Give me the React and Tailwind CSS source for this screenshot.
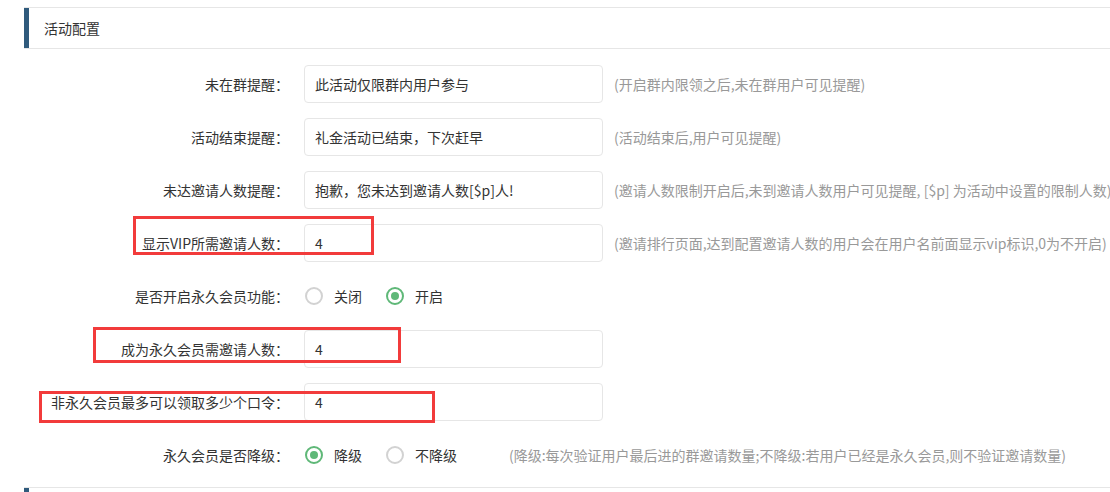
import React from "react";

const font = { fontFamily: '"Noto Sans CJK SC", "Noto Sans", sans-serif' };

function Label({ children }) {
  return (
    <div className="w-[280px] shrink-0 pr-[15px] py-[9px] text-right leading-[20px] text-[14px] text-[#333] whitespace-nowrap">
      {children}
    </div>
  );
}

function InputRow({ label, value, hint }) {
  return (
    <div className="flex items-start h-[38px] mb-[15px]">
      <Label>{label}</Label>
      <div className="w-[299px] h-[38px] shrink-0 border border-[#e6e6e6] rounded-[4px] pl-[10px] flex items-center text-[14px] text-[#333] bg-white">
        {value}
      </div>
      {hint && (
        <div className="ml-[11px] py-[9px] leading-[20px] text-[14px] text-[#999] whitespace-nowrap">
          {hint}
        </div>
      )}
    </div>
  );
}

function Radio({ checked, children }) {
  return (
    <div className="flex items-center mr-[24px]">
      {checked ? (
        <span className="w-[18px] h-[18px] rounded-full border-[2px] border-[#5fb878] flex items-center justify-center">
          <span className="w-[8px] h-[8px] rounded-full bg-[#5fb878]" />
        </span>
      ) : (
        <span className="w-[18px] h-[18px] rounded-full border-[2px] border-[#d2d2d2]" />
      )}
      <span className="ml-[11px] text-[14px] text-[#333] leading-[20px]">{children}</span>
    </div>
  );
}

function RadioRow({ label, options, hint }) {
  return (
    <div className="flex items-start h-[38px] mb-[15px]">
      <Label>{label}</Label>
      <div className="flex items-center h-[38px] pl-[1px]">
        {options.map((o, i) => (
          <Radio key={i} checked={o.checked}>
            {o.text}
          </Radio>
        ))}
        {hint && (
          <div className="ml-[28px] leading-[20px] text-[14px] text-[#999] whitespace-nowrap">
            {hint}
          </div>
        )}
      </div>
    </div>
  );
}

export default function App() {
  return (
    <div className="relative w-[1110px] h-[492px] overflow-hidden bg-white" style={font}>
      <div className="pl-[24px] pt-[7px]">
        <div className="flex h-[42px] border-y border-[#e6e6e6] w-[1200px]">
          <div className="w-[5px] bg-[#2f5a7c]" />
          <div className="pl-[15px] flex items-center text-[14px] text-[#333]">活动配置</div>
        </div>
        <div className="pt-[16px]">
          <InputRow
            label="未在群提醒："
            value="此活动仅限群内用户参与"
            hint="(开启群内限领之后,未在群用户可见提醒)"
          />
          <InputRow
            label="活动结束提醒："
            value="礼金活动已结束，下次赶早"
            hint="(活动结束后,用户可见提醒)"
          />
          <InputRow
            label="未达邀请人数提醒："
            value="抱歉，您未达到邀请人数[$p]人!"
            hint="(邀请人数限制开启后,未到邀请人数用户可见提醒, [$p] 为活动中设置的限制人数)"
          />
          <InputRow
            label="显示VIP所需邀请人数："
            value="4"
            hint="(邀请排行页面,达到配置邀请人数的用户会在用户名前面显示vip标识,0为不开启)"
          />
          <RadioRow
            label="是否开启永久会员功能："
            options={[
              { text: "关闭", checked: false },
              { text: "开启", checked: true },
            ]}
          />
          <InputRow label="成为永久会员需邀请人数：" value="4" />
          <InputRow label="非永久会员最多可以领取多少个口令：" value="4" />
          <RadioRow
            label="永久会员是否降级："
            options={[
              { text: "降级", checked: true },
              { text: "不降级", checked: false },
            ]}
            hint="(降级:每次验证用户最后进的群邀请数量;不降级:若用户已经是永久会员,则不验证邀请数量)"
          />
        </div>
        <div className="flex h-[20px] border-t border-[#e6e6e6] w-[1200px] -mt-[2px]">
          <div className="w-[5px] bg-[#2f5a7c]" />
        </div>
      </div>

      <div className="absolute left-[133px] top-[216px] w-[241px] h-[39px] border-[3px] border-[#f23b3b]" />
      <div className="absolute left-[93px] top-[327px] w-[308px] h-[36px] border-[3px] border-[#f23b3b]" />
      <div className="absolute left-[39px] top-[391px] w-[396px] h-[32px] border-[3px] border-[#f23b3b]" />
    </div>
  );
}
